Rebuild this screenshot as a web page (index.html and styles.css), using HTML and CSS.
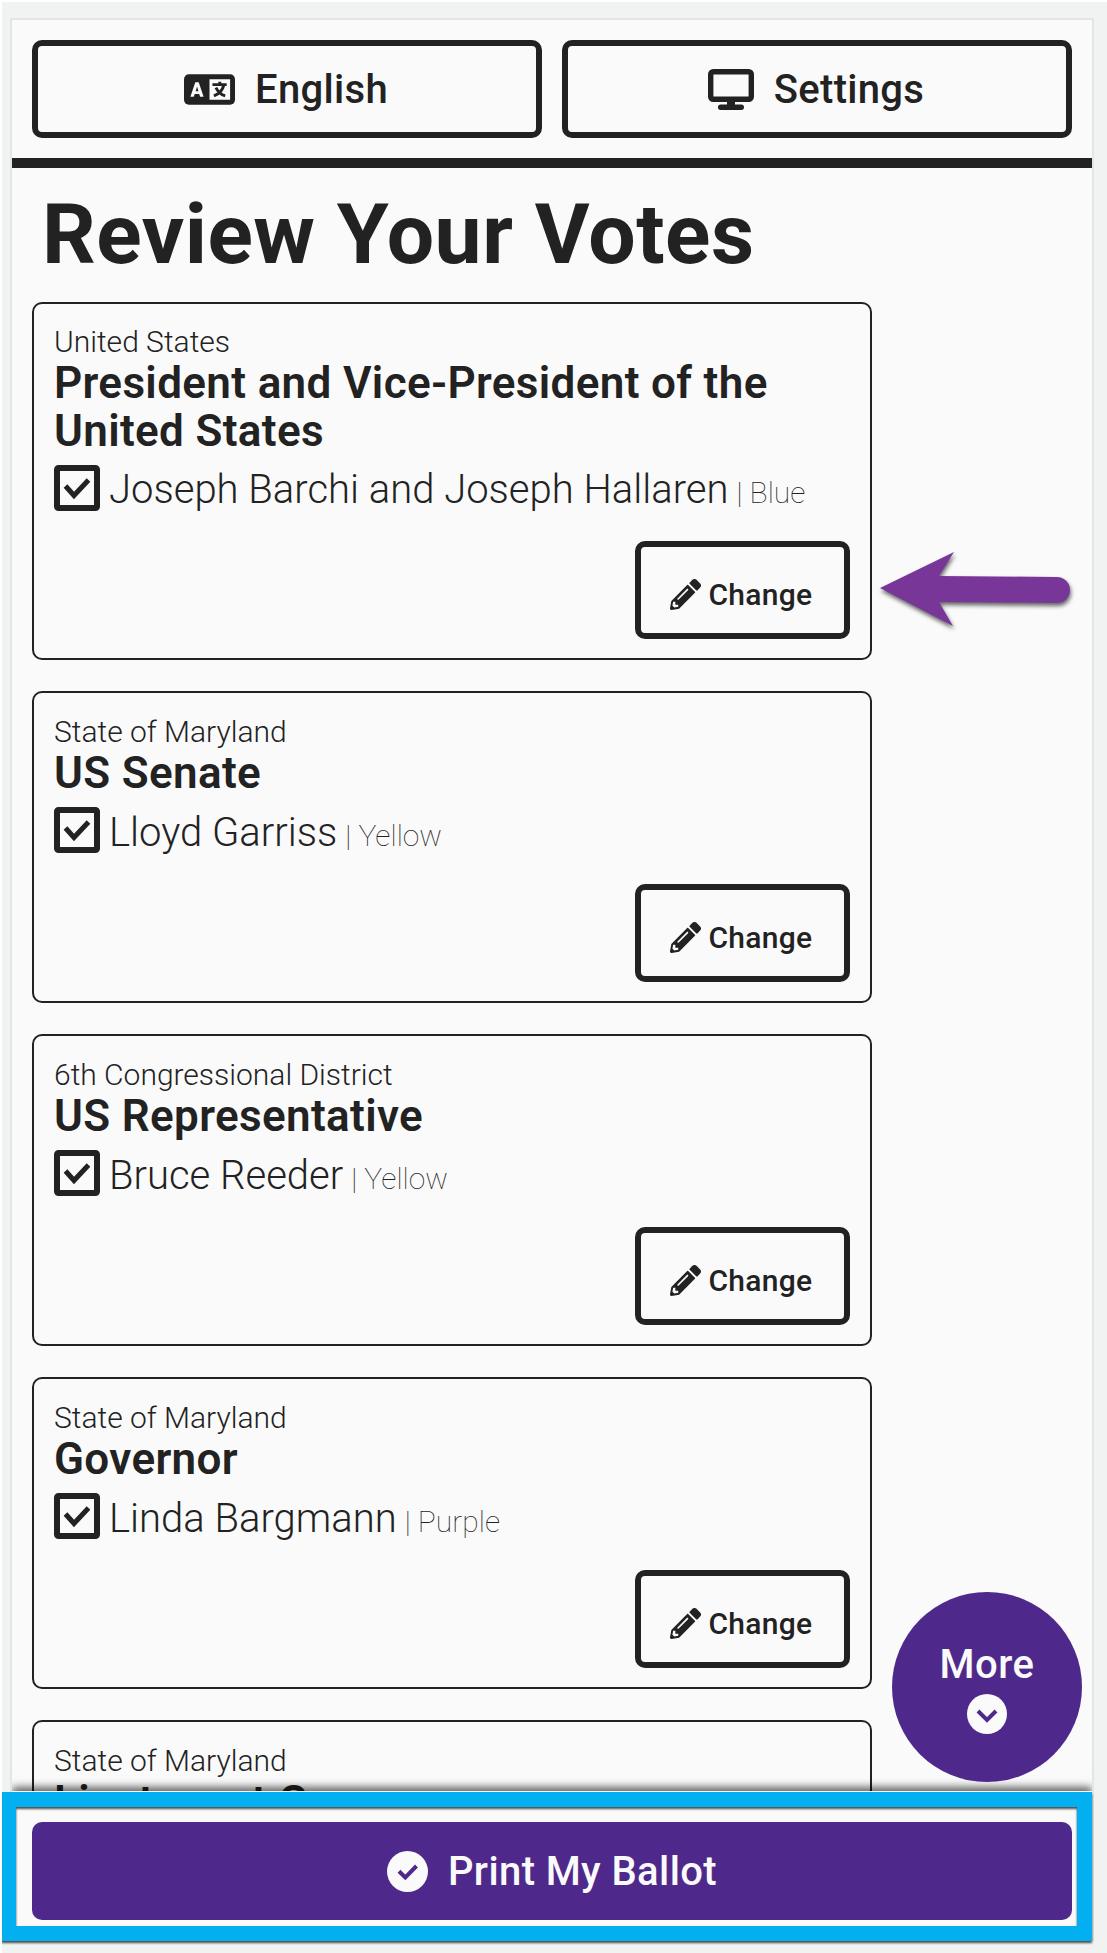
FILE: index.html
```html
<!DOCTYPE html>
<html lang="en">
<head>
<meta charset="utf-8">
<title>Review Your Votes</title>
<link rel="stylesheet" href="styles.css">
</head>
<body>
<svg width="0" height="0" class="defs" aria-hidden="true">
  <symbol id="pencil" viewBox="0 0 512 512"><path d="M498 142l-46 46c-5 5-13 5-17 0L324 77c-5-5-5-12 0-17l46-46c19-19 49-19 68 0l60 60c19 19 19 49 0 68zm-214-42L22 362 0 484c-3 16 12 30 28 28l122-22 262-262c5-5 5-13 0-17L301 100c-4-5-12-5-17 0zM124 340c-5-6-5-14 0-20l154-154c6-5 14-5 20 0s5 14 0 20L144 340c-6 5-14 5-20 0zm-36 84h48v36l-64 12-32-32 12-64h36v48z"/></symbol>
  <symbol id="check" viewBox="0 0 46 46"><rect x="3" y="3" width="40" height="40" rx="1.500" fill="none" stroke="currentColor" stroke-width="6"/><path d="M11.500 21L20 30.500L34.500 15" fill="none" stroke="currentColor" stroke-width="5"/></symbol>
</svg>
<div class="screen">
  <header class="topbar">
    <button class="btn"><svg class="i-lang" viewBox="0 0 52 31"><rect width="52" height="31" rx="5"/><path fill="#fafafa" d="M26 5h21v21H26zM11.500 8h3.500l5 15h-3.600l-.9-3h-4.600l-.9 3H6.500zm1.800 4.500l-1.400 4.700h2.800z"/><path d="M29 10.500h14.500M36.500 7.500v3M40.500 11c-1 5-5 9-10 11M32.500 13.500c2 4 5 7 9.500 8.500" fill="none" stroke="currentColor" stroke-width="3"/></svg><span>English</span></button>
    <button class="btn"><svg class="i-mon" viewBox="0 0 46 41"><rect x="2.700" y="2.700" width="40.600" height="27.600" rx="2.500" fill="none" stroke="currentColor" stroke-width="5.400"/><path d="M19 31h8v5h-8z"/><rect x="10" y="35.500" width="26" height="5.500" rx="2.700"/></svg><span>Settings</span></button>
  </header>
  <main class="review">
    <h1>Review Your Votes</h1>
    <section class="card tall">
      <p class="area">United States</p>
      <h2>President and Vice-President of the United States</h2>
      <p class="vote"><svg><use href="#check"/></svg><span class="name">Joseph Barchi and Joseph Hallaren</span><span class="party">| Blue</span></p>
      <button class="btn change"><svg><use href="#pencil"/></svg><span>Change</span></button>
    </section>
    <section class="card">
      <p class="area">State of Maryland</p>
      <h2>US Senate</h2>
      <p class="vote"><svg><use href="#check"/></svg><span class="name">Lloyd Garriss</span><span class="party">| Yellow</span></p>
      <button class="btn change"><svg><use href="#pencil"/></svg><span>Change</span></button>
    </section>
    <section class="card">
      <p class="area">6th Congressional District</p>
      <h2>US Representative</h2>
      <p class="vote"><svg><use href="#check"/></svg><span class="name">Bruce Reeder</span><span class="party">| Yellow</span></p>
      <button class="btn change"><svg><use href="#pencil"/></svg><span>Change</span></button>
    </section>
    <section class="card">
      <p class="area">State of Maryland</p>
      <h2>Governor</h2>
      <p class="vote"><svg><use href="#check"/></svg><span class="name">Linda Bargmann</span><span class="party">| Purple</span></p>
      <button class="btn change"><svg><use href="#pencil"/></svg><span>Change</span></button>
    </section>
    <section class="card">
      <p class="area">State of Maryland</p>
      <h2>Lieutenant Governor</h2>
    </section>
  </main>
  <footer class="bottom">
    <button class="print"><svg viewBox="0 0 41 41"><circle cx="20.500" cy="20.500" r="20.500"/><path d="M12 20.300L18.300 26.500L29.500 15" fill="none" stroke="#4e298b" stroke-width="4"/></svg><span>Print My Ballot</span></button>
  </footer>
</div>
<button class="more"><span>More</span><svg viewBox="0 0 40 40"><circle cx="20" cy="20" r="20"/><path d="M11 17l9 9 9-9" fill="none" stroke="#4e298b" stroke-width="4"/></svg></button>
<svg class="arrow" viewBox="0 0 200 84"><path d="M6 45L80 9L65 33L183 34A13 13 0 0 1 183 60L65 59L79 83Z"/></svg>
<div class="highlight"></div>
</body>
</html>
```
FILE: styles.css
```css
* { box-sizing: border-box; }
html, body { height: 1953px; overflow: hidden; }
body {
  margin: 0;
  position: relative;
  padding: 16px 13px 12px 8px;
  background: #f1f3f3;
  border-top: 2px solid #fff;
  border-left: 2px solid #fff;
  font-family: Roboto, "Liberation Sans", sans-serif;
  color: #222;
}
h1, h2, p { margin: 0; }
button { font: inherit; color: inherit; margin: 0; padding: 0; }
svg { fill: currentColor; display: block; flex: none; }
.defs { position: absolute; }
.screen {
  width: 1084px;
  height: 1923px;
  border: 2px solid #e3e5e5;
  background: #fafafa;
  display: flex;
  flex-direction: column;
}
.topbar {
  display: flex;
  gap: 20px;
  padding: 20px 20px 0;
  height: 147.500px;
  border-bottom: 10px solid #222;
  flex: none;
}
.btn {
  flex: 1;
  height: 98px;
  border: 6px solid #222;
  border-radius: 10px;
  background: none;
  display: flex;
  align-items: center;
  justify-content: center;
  gap: 20px;
  padding: 1px 2px 0 0;
  font-size: 40px;
  font-weight: 500;
  letter-spacing: .3px;
}
.i-lang { width: 51px; height: 31px; }
.i-mon { width: 46px; height: 41px; }
.review { flex: 1; min-height: 0; overflow: hidden; padding: 0 20px; }
h1 {
  font-size: 84px;
  line-height: 134px;
  font-weight: 700;
  padding-left: 10px;
  letter-spacing: .5px;
  white-space: nowrap;
}
.card {
  width: 840px;
  height: 312.500px;
  margin-bottom: 30.600px;
  padding: 21px 20px 19.500px;
  border: 2px solid #222;
  border-radius: 10px;
  display: flex;
  flex-direction: column;
}
.card.tall { height: 358.500px; padding-top: 20px; }
.area { font-size: 30px; line-height: 35px; font-weight: 300; }
h2 { font-size: 44px; line-height: 48px; font-weight: 600; letter-spacing: .35px; }
.vote { display: flex; align-items: baseline; line-height: 48px; margin-top: 12px; }
.tall .vote { margin-top: 11.500px; }
.vote svg { width: 46px; height: 46px; align-self: center; margin: -8px 9px 0 0; }
.name { font-size: 40px; font-weight: 300; }
.party { font-size: 30px; font-weight: 100; margin-left: 8px; }
.change {
  flex: none;
  width: 215px;
  align-self: flex-end;
  margin-top: auto;
  font-size: 30px;
  gap: 7px;
  padding-top: 10px;
}
.change svg { width: 31px; height: 31px; }
.bottom {
  flex: none;
  height: 148px;
  padding: 30.500px 20px 0;
  background: #fafafa;
  box-shadow: 0 -4px 8px rgba(0,0,0,.6);
  clip-path: inset(-20px 0 0 0);
  position: relative;
}
.print {
  width: 100%;
  height: 98px;
  border: 0;
  border-radius: 10px;
  background: #4e298b;
  color: #fafafa;
  display: flex;
  align-items: center;
  justify-content: center;
  gap: 20px;
  padding-top: 1px;
  font-size: 40px;
  font-weight: 500;
  letter-spacing: .4px;
}
.print svg { width: 41px; height: 41px; }
.more {
  position: absolute;
  left: 890px;
  top: 1590px;
  width: 190px;
  height: 190px;
  border: 0;
  border-radius: 50%;
  background: #4e298b;
  color: #fafafa;
  display: flex;
  flex-direction: column;
  align-items: center;
  font-size: 40px;
  font-weight: 500;
  line-height: 48px;
  letter-spacing: .5px;
  padding-top: 49px;
}
.more svg { width: 40px; height: 40px; margin-top: 5px; }
.arrow {
  position: absolute;
  left: 872px;
  top: 541px;
  width: 200px;
  height: 84px;
  color: #783699;
  overflow: visible;
  filter: drop-shadow(1px 3px 2px rgba(0,0,0,.6));
}
.highlight {
  position: absolute;
  left: -1px;
  top: 1790px;
  width: 1091px;
  height: 149px;
  border: 15px solid #02aff1;
  filter: drop-shadow(0 2px 1px rgba(0,0,0,.7));
}
```
